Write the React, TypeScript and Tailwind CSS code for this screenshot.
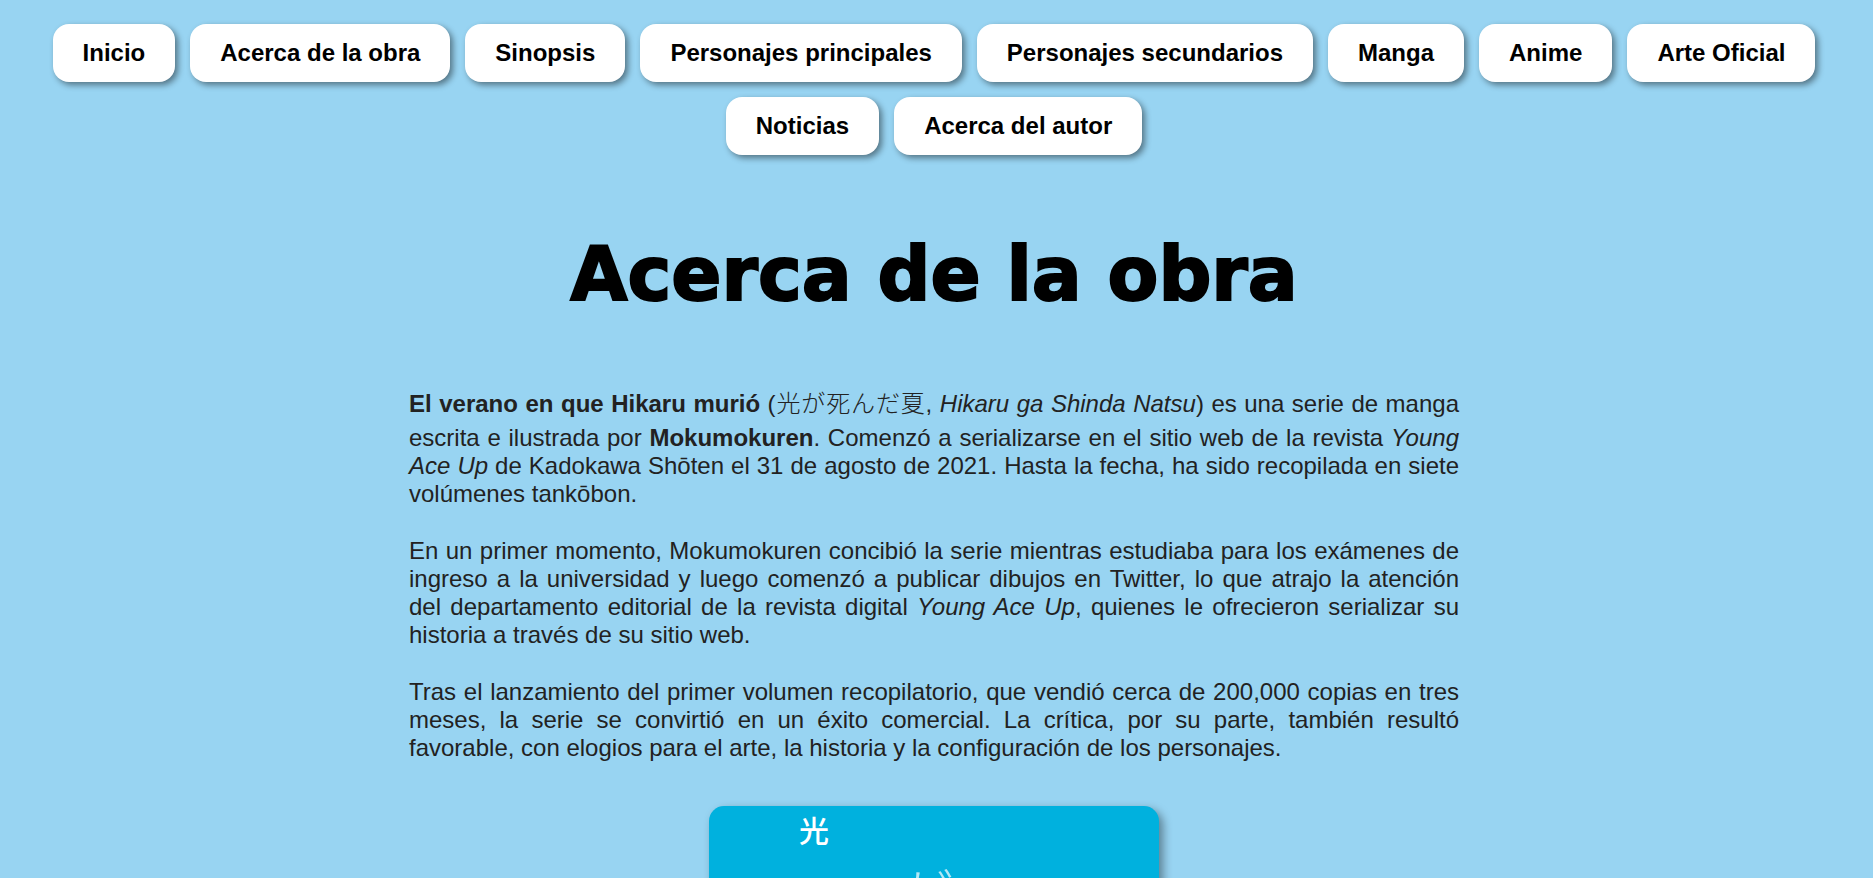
const items = [
  "Inicio",
  "Acerca de la obra",
  "Sinopsis",
  "Personajes principales",
  "Personajes secundarios",
  "Manga",
  "Anime",
  "Arte Oficial",
  "Noticias",
  "Acerca del autor",
];

export default function App() {
  return (
    <div className="h-screen overflow-hidden bg-[#98d4f2] pr-[5px] font-['Liberation_Sans',Arial,'Noto_Sans_CJK_JP',sans-serif]">
      <nav className="flex flex-wrap justify-center gap-[15px] pt-[24px]">
        {items.map((t) => (
          <a
            key={t}
            href="#"
            className="rounded-[16px] bg-white px-[30px] py-[15px] text-[24px] font-bold leading-[28px] text-black shadow-[3px_3px_6px_rgba(0,0,0,0.45)]"
          >
            {t}
          </a>
        ))}
      </nav>

      <h1 className="mt-[82px] text-center font-['DejaVu_Sans',sans-serif] text-[74px] font-bold leading-[74px] text-black [-webkit-text-stroke:2px_black]">
        Acerca de la obra
      </h1>

      <div className="mx-auto mt-[69px] w-[1050px] text-justify text-[24px] leading-[28.2px] text-[#222]">
        <p className="mb-[28.2px]">
          <b>El verano en que Hikaru murió</b> (
          <span className="font-['Noto_Sans_CJK_JP',sans-serif] font-light leading-[44px]">光が死んだ夏</span>,{" "}
          <i>Hikaru ga Shinda Natsu</i>) es una serie de manga escrita e ilustrada por <b>Mokumokuren</b>. Comenzó a
          serializarse en el sitio web de la revista <i>Young Ace Up</i> de Kadokawa Shōten el 31 de agosto de 2021.
          Hasta la fecha, ha sido recopilada en siete volúmenes tankōbon.
        </p>
        <p className="mb-[28.2px]">
          En un primer momento, Mokumokuren concibió la serie mientras estudiaba para los exámenes de ingreso a la
          universidad y luego comenzó a publicar dibujos en Twitter, lo que atrajo la atención del departamento
          editorial de la revista digital <i>Young Ace Up</i>, quienes le ofrecieron serializar su historia a través de
          su sitio web.
        </p>
        <p>
          Tras el lanzamiento del primer volumen recopilatorio, que vendió cerca de 200,000 copias en tres meses, la
          serie se convirtió en un éxito comercial. La crítica, por su parte, también resultó favorable, con elogios
          para el arte, la historia y la configuración de los personajes.
        </p>
      </div>

      <div className="relative mx-auto mt-[44px] h-[600px] w-[450px] overflow-hidden rounded-[15px] bg-[#00b1de] shadow-[4px_4px_10px_rgba(0,0,0,0.4)]">
        <span className="absolute left-[90px] top-[1px] font-['Noto_Sans_CJK_JP',sans-serif] text-[30px] font-medium text-white">
          光
        </span>
        <span className="absolute left-[188px] top-[44px] font-['Noto_Sans_CJK_JP',sans-serif] text-[56px] font-light text-white/70">
          が
        </span>
      </div>
    </div>
  );
}
